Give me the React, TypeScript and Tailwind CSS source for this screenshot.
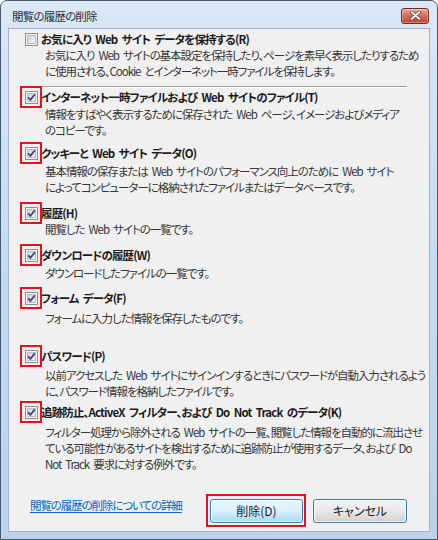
import type { ReactNode } from 'react';

type Item = {
  label: string;
  desc: string[];
  checked: boolean;
  rowMt: string;
  descMt: string;
};

const items: Item[] = [
  {
    label: 'インターネット一時ファイルおよび Web サイトのファイル(T)',
    desc: ['情報をすばやく表示するために保存された Web ページ、イメージおよびメディア', 'のコピーです。'],
    checked: true,
    rowMt: 'mt-[1px]',
    descMt: 'mt-[1px]',
  },
  {
    label: 'クッキーと Web サイト データ(O)',
    desc: ['基本情報の保存または Web サイトのパフォーマンス向上のために Web サイト', 'によってコンピューターに格納されたファイルまたはデータベースです。'],
    checked: true,
    rowMt: 'mt-[7px]',
    descMt: 'mt-[2px]',
  },
  {
    label: '履歴(H)',
    desc: ['閲覧した Web サイトの一覧です。'],
    checked: true,
    rowMt: 'mt-[10px]',
    descMt: 'mt-0',
  },
  {
    label: 'ダウンロードの履歴(W)',
    desc: ['ダウンロードしたファイルの一覧です。'],
    checked: true,
    rowMt: 'mt-[10px]',
    descMt: 'mt-[2px]',
  },
  {
    label: 'フォーム データ(F)',
    desc: ['フォームに入力した情報を保存したものです。'],
    checked: true,
    rowMt: 'mt-[9px]',
    descMt: 'mt-[4px]',
  },
  {
    label: 'パスワード(P)',
    desc: ['以前アクセスした Web サイトにサインインするときにパスワードが自動入力されるよう', 'に、パスワード情報を格納したファイルです。'],
    checked: true,
    rowMt: 'mt-[22px]',
    descMt: 'mt-[3px]',
  },
  {
    label: '追跡防止、ActiveX フィルター、および Do Not Track のデータ(K)',
    desc: [
      'フィルター処理から除外される Web サイトの一覧、閲覧した情報を自動的に流出させ',
      'ている可能性があるサイトを検出するために追跡防止が使用するデータ、および Do',
      'Not Track 要求に対する例外です。',
    ],
    checked: true,
    rowMt: 'mt-[5px]',
    descMt: 'mt-[4px]',
  },
];

function CheckBox({ checked }: { checked: boolean }) {
  return (
    <svg width="13" height="13" viewBox="0 0 13 13" className="shrink-0">
      <defs>
        <linearGradient id="cbfill" x1="0" y1="0" x2="1" y2="1">
          <stop offset="0" stopColor="#cbcfd5" />
          <stop offset="1" stopColor="#f6f7f9" />
        </linearGradient>
      </defs>
      <rect x="0.5" y="0.5" width="12" height="12" fill="#f4f4f4" stroke="#8e8f8f" />
      <rect x="2.5" y="2.5" width="8" height="8" fill="url(#cbfill)" stroke="#b9bec6" />
      {checked && (
        <path d="M3.2 6.4 L5.4 8.9 L9.8 3.4" fill="none" stroke="#34458a" strokeWidth="1.7" />
      )}
    </svg>
  );
}

function RedMark({ children, inset }: { children: ReactNode; inset: string }) {
  return (
    <div className="relative shrink-0">
      {children}
      <div className={`pointer-events-none absolute ${inset} border-[2.5px] border-[#e8101c]`} />
    </div>
  );
}

function Row({ label, checked, marked }: { label: string; checked: boolean; marked: boolean }) {
  return (
    <div className="flex h-[16px] items-center gap-[3px] pl-[16px]">
      {marked ? (
        <RedMark inset="-top-[5px] -bottom-[4px] -left-[5px] -right-[4px]">
          <div className="flex">
            <CheckBox checked={checked} />
          </div>
        </RedMark>
      ) : (
        <CheckBox checked={checked} />
      )}
      <span className="whitespace-nowrap font-bold tracking-[-0.85px] text-[#1b1b1b]">{label}</span>
    </div>
  );
}

function Desc({ lines, mt }: { lines: string[]; mt: string }) {
  return (
    <div className={`${mt} pl-[36px] tracking-[-1.05px] text-[#363636]`}>
      {lines.map((l) => (
        <div key={l} className="h-[16px] whitespace-nowrap leading-[16px]">
          {l}
        </div>
      ))}
    </div>
  );
}

export default function App() {
  return (
    <div
      className="flex h-[540px] w-[438px] flex-col overflow-hidden rounded-t-[7px] border border-[#44586f] bg-gradient-to-b from-[#dbe8f6] via-[#c6daef] to-[#bcd2ea] text-[11.5px] leading-[16px] [word-spacing:2.5px]"
      style={{ fontFamily: '"Meiryo UI", "Noto Sans CJK JP", sans-serif', fontFeatureSettings: '"palt"' }}
    >
      {/* title bar */}
      <div className="flex h-[27px] shrink-0 items-center justify-between pl-[11px] pr-[8px]">
        <span className="pt-[2px] tracking-[-0.8px] text-[#1f2f42]">閲覧の履歴の削除</span>
        <div className="mt-[2px] flex h-[16px] w-[28px] items-center justify-center rounded-[3px] border border-[#6b2b22] bg-gradient-to-b from-[#e9a897] via-[#d56b55] to-[#c2422b] shadow-[inset_0_0_0_1px_rgba(255,255,255,0.35)]">
          <svg width="11" height="9" viewBox="0 0 11 9">
            <path d="M1.5 1 L9.5 8 M9.5 1 L1.5 8" stroke="#5a2a24" strokeWidth="3.2" strokeLinecap="round" />
            <path d="M1.5 1 L9.5 8 M9.5 1 L1.5 8" stroke="#ffffff" strokeWidth="1.8" strokeLinecap="round" />
          </svg>
        </div>
      </div>

      {/* client area */}
      <div className="mx-[7px] mb-[7px] flex flex-1 flex-col border border-[#9fb4cc] bg-[#f0f0f0]">
        <div className="mt-[2px]">
          <Row label="お気に入り Web サイト データを保持する(R)" checked={false} marked={false} />
          <Desc
            lines={[
              'お気に入り Web サイトの基本設定を保持したり、ページを素早く表示したりするため',
              'に使用される、Cookie とインターネット一時ファイルを保持します。',
            ]}
            mt="mt-0"
          />
        </div>

        <div className="ml-[22px] mr-[22px] mt-[7px] h-[2px] border-t border-[#a0a0a0] border-b-white border-b" />

        {items.map((it) => (
          <div key={it.label} className={it.rowMt}>
            <Row label={it.label} checked={it.checked} marked />
            <Desc lines={it.desc} mt={it.descMt} />
          </div>
        ))}

        {/* footer */}
        <div className="mt-[27px] flex items-start pl-[21px] pr-[22px]">
          <a className="mt-[-2px] flex-1 whitespace-nowrap tracking-[-1.1px] text-[#0066cc] underline underline-offset-[2px]" href="#">
            閲覧の履歴の削除についての詳細
          </a>
          <div className="flex gap-[10px]">
            <RedMark inset="-top-[5px] -bottom-[4px] -left-[4px] -right-[3px]">
              <button className="flex h-[24px] w-[93px] items-center justify-center rounded-[3px] border border-[#3c7fb1] bg-gradient-to-b from-[#eaf6fd] via-[#d9f0fc] to-[#a7d9f5] text-[12px] text-[#1b1b1b] shadow-[inset_0_0_0_1px_rgba(255,255,255,0.7)]">
                削除(D)
              </button>
            </RedMark>
            <button className="flex h-[24px] w-[94px] items-center justify-center rounded-[3px] border border-[#3c7fb1] bg-gradient-to-b from-[#f4f4f4] via-[#e8e8e8] to-[#d2d2d2] text-[12px] text-[#1b1b1b] shadow-[inset_0_0_0_1px_rgba(255,255,255,0.75)]">
              キャンセル
            </button>
          </div>
        </div>
      </div>
    </div>
  );
}
